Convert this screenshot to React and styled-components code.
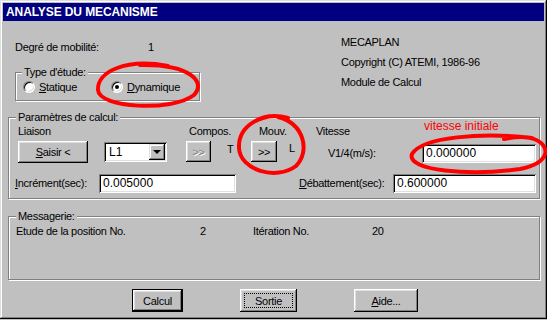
import React from 'react';
import styled, { createGlobalStyle, css } from 'styled-components';

const GlobalStyle = createGlobalStyle`
  html, body {
    margin: 0;
    padding: 0;
    background: #c0c0c0;
  }
  body {
    font-family: "Liberation Sans", Arial, sans-serif;
    font-size: 11px;
    letter-spacing: -0.3px;
    color: #000;
  }
`;

const Window = styled.div`
  position: relative;
  width: 547px;
  height: 319px;
  box-sizing: border-box;
  padding: 3px 3px 0 3px;
  background: #c0c0c0;
  box-shadow: inset -1px -1px #000, inset 1px 1px #dfdfdf,
    inset -2px -2px #808080, inset 2px 2px #fff;
  display: flex;
  flex-direction: column;
`;

const TitleBar = styled.div`
  height: 18px;
  line-height: 18px;
  padding-left: 3px;
  background: #000080;
  color: #fff;
  font-size: 12px;
  font-weight: bold;
  letter-spacing: -0.1px;
`;

const Top = styled.div`
  display: grid;
  grid-template-columns: 338px 1fr;
  height: 89px;
`;

const LeftCol = styled.div`
  padding: 19px 0 0 12px;
`;

const RightCol = styled.div`
  padding-top: 11px;
  line-height: 20px;
`;

const InfoRow = styled.div`
  display: grid;
  grid-template-columns: 133px auto;
  line-height: 14px;
`;

const GroupBox = styled.fieldset`
  box-sizing: border-box;
  width: ${p => p.$w}px;
  height: ${p => p.$h}px;
  margin: ${p => p.$margin || 0};
  padding: 0;
  min-width: 0;
  border: 1px solid #808080;
  box-shadow: inset 1px 1px #fff, 1px 1px #fff;
`;

const Legend = styled.legend`
  margin-left: ${p => p.$left}px;
  padding: 0 2px;
  line-height: 14px;
  background: #c0c0c0;
`;

const RadioRow = styled.div`
  display: flex;
  align-items: center;
  height: 16px;
  padding-left: 7px;
`;

const RadioItem = styled.label`
  display: flex;
  align-items: center;
  gap: 4px;
  width: ${p => p.$w || 'auto'};
`;

const RadioDot = styled.span`
  position: relative;
  box-sizing: border-box;
  width: 12px;
  height: 12px;
  border-radius: 50%;
  background: #fff;
  border: 1px solid;
  border-color: #808080 #fff #fff #808080;
  box-shadow: inset 1px 1px #000, inset -1px -1px #dfdfdf;

  ${p => p.$checked && css`
    &::after {
      content: '';
      position: absolute;
      left: 3px;
      top: 3px;
      width: 4px;
      height: 4px;
      border-radius: 50%;
      background: #000;
    }
  `}
`;

const ParamGrid = styled.div`
  display: grid;
  grid-template-columns: 86px 82px 41px 24px 37px 28px 106px 114px;
  grid-template-rows: 14px 22px;
  row-gap: 3px;
  padding-left: 9px;
  line-height: 14px;
`;

const Label = styled.span`
  grid-column: ${p => p.$col || 'auto'};
  margin-left: ${p => p.$ml || 0}px;
  margin-top: ${p => p.$mt || 0}px;
  white-space: nowrap;
`;

const Annotation = styled.span`
  grid-column: 8;
  margin: -5px 0 0 2px;
  color: #ff0000;
  font-size: 12px;
  letter-spacing: 0;
  white-space: nowrap;
`;

const Button = styled.button`
  box-sizing: border-box;
  width: ${p => p.$w}px;
  height: ${p => p.$h || 23}px;
  padding: 0;
  border: none;
  background: #c0c0c0;
  color: #000;
  font: inherit;
  letter-spacing: inherit;
  box-shadow: inset -1px -1px #000, inset 1px 1px #fff,
    inset -2px -2px #808080, inset 2px 2px #dfdfdf;

  ${p => p.$default && css`
    box-shadow: inset 0 0 0 1px #000, inset -2px -2px #000, inset 2px 2px #fff,
      inset -3px -3px #808080, inset 3px 3px #dfdfdf;
  `}

  ${p => p.$focused && css`
    outline: 1px dotted #000;
    outline-offset: -5px;
  `}

  ${p => p.disabled && css`
    color: #808080;
    text-shadow: 1px 1px #fff;
  `}
`;

const Combo = styled.div`
  box-sizing: border-box;
  display: flex;
  align-items: center;
  justify-content: space-between;
  width: 63px;
  height: 20px;
  margin-top: 1px;
  padding: 2px 2px 2px 5px;
  background: #fff;
  box-shadow: inset 1px 1px #808080, inset -1px -1px #fff,
    inset 2px 2px #000, inset -2px -2px #dfdfdf;
  font-size: 12px;
  letter-spacing: 0;
`;

const ComboButton = styled.span`
  display: flex;
  align-items: center;
  justify-content: center;
  width: 16px;
  height: 16px;
  background: #c0c0c0;
  box-sizing: border-box;
  box-shadow: inset -1px -1px #000, inset 1px 1px #dfdfdf,
    inset -2px -2px #808080, inset 2px 2px #fff;

  &::after {
    content: '';
    border-left: 4px solid transparent;
    border-right: 4px solid transparent;
    border-top: 4px solid #000;
  }
`;

const Field = styled.div`
  box-sizing: border-box;
  width: ${p => p.$w}px;
  height: 19px;
  margin-top: ${p => p.$mt || 0}px;
  padding: 0 4px;
  line-height: 19px;
  background: #fff;
  font-size: 12px;
  letter-spacing: 0;
  box-shadow: inset 1px 1px #808080, inset -1px -1px #fff,
    inset 2px 2px #000, inset -2px -2px #dfdfdf;
`;

const FieldRow = styled.div`
  display: grid;
  grid-template-columns: 84px 137px 63px 94px 143px;
  margin-top: 11px;
  padding-left: 6px;
  line-height: 19px;
`;

const MessageRow = styled.div`
  display: grid;
  grid-template-columns: 184px 53px 119px auto;
  padding: 1px 0 0 7px;
  line-height: 14px;
`;

const ButtonRow = styled.div`
  display: flex;
  gap: 57px;
  margin-top: 9px;
  padding-left: 129px;
`;

const Overlay = styled.svg`
  position: absolute;
  left: 0;
  top: 0;
  pointer-events: none;
`;

function App() {
  return (
    <>
      <GlobalStyle />
      <Window>
        <TitleBar>ANALYSE DU MECANISME</TitleBar>

        <Top>
          <LeftCol>
            <InfoRow>
              <span>Degré de mobilité:</span>
              <span>1</span>
            </InfoRow>
            <GroupBox $w={185} $h={36} $margin="11px 0 0 0">
              <Legend $left={6}>Type d'étude:</Legend>
              <RadioRow>
                <RadioItem $w="88px">
                  <RadioDot />
                  <span><u>S</u>tatique</span>
                </RadioItem>
                <RadioItem>
                  <RadioDot $checked />
                  <span><u>D</u>ynamique</span>
                </RadioItem>
              </RadioRow>
            </GroupBox>
          </LeftCol>
          <RightCol>
            <div>MECAPLAN</div>
            <div>Copyright (C) ATEMI, 1986-96</div>
            <div>Module de Calcul</div>
          </RightCol>
        </Top>

        <GroupBox $w={532} $h={89} $margin="0 0 0 5px">
          <Legend $left={7}>Paramètres de calcul:</Legend>
          <ParamGrid>
            <Label $col={1}>Liaison</Label>
            <Label $col="3 / span 2" $ml={3}>Compos.</Label>
            <Label $col="5 / span 2" $ml={8}>Mouv.</Label>
            <Label $col={7}>Vitesse</Label>
            <Annotation>vitesse initiale</Annotation>

            <Button $w={70} $h={22}><u>S</u>aisir &lt;</Button>
            <Combo>
              <span>L1</span>
              <ComboButton />
            </Combo>
            <Button $w={25} $h={21} disabled>&gt;&gt;</Button>
            <Label $mt={1}>T</Label>
            <Button $w={26} $h={21}>&gt;&gt;</Button>
            <Label $ml={1} $mt={0}>L</Label>
            <Label $ml={12} $mt={5}>V1/4(m/s):</Label>
            <Field $w={114} $mt={3}>0.000000</Field>
          </ParamGrid>
          <FieldRow>
            <span><u>I</u>ncrément(sec):</span>
            <Field $w={137}>0.005000</Field>
            <span />
            <span><u>D</u>ébattement(sec):</span>
            <Field $w={143}>0.600000</Field>
          </FieldRow>
        </GroupBox>

        <GroupBox $w={532} $h={71} $margin="10px 0 0 5px">
          <Legend $left={7}>Messagerie:</Legend>
          <MessageRow>
            <span>Etude de la position No.</span>
            <span>2</span>
            <span>Itération No.</span>
            <span>20</span>
          </MessageRow>
        </GroupBox>

        <ButtonRow>
          <Button $w={51} $default>Calcul</Button>
          <Button $w={57} $focused>Sortie</Button>
          <Button $w={64}><u>A</u>ide...</Button>
        </ButtonRow>

        <Overlay width="547" height="320" viewBox="0 0 547 320">
          <g fill="none" stroke="#ff0000" strokeWidth="4" strokeLinecap="round">
            <path d="M 168 66 C 125 58, 97 72, 98 90 C 99 108, 172 112, 194 95 C 206 83, 192 64, 140 65" />
            <path d="M 288 118 C 262 111, 238 126, 239 148 C 240 170, 276 181, 296 166 C 310 152, 305 124, 278 117" />
            <path d="M 532 138 C 482 132, 422 137, 412 154 C 406 171, 470 176, 520 169 C 550 163, 552 146, 534 139 C 526 136, 514 137, 504 139" />
          </g>
        </Overlay>
      </Window>
    </>
  );
}

export default App;
